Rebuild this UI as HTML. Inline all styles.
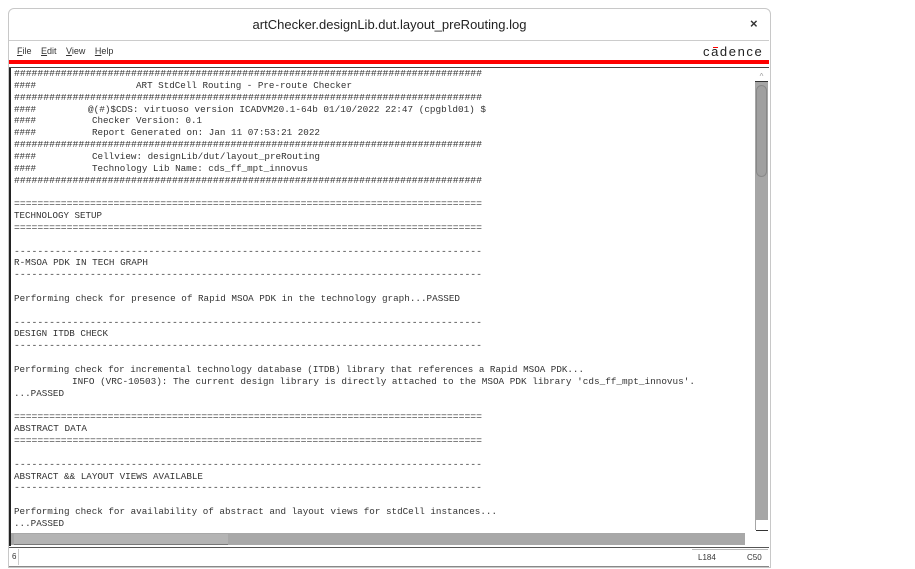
<!DOCTYPE html>
<html><head><meta charset="utf-8"><style>
body{margin:0;width:915px;height:569px;background:#fff;position:relative;overflow:hidden;font-family:"Liberation Sans",sans-serif}
.a{position:absolute}
.t{position:absolute;font-family:"Liberation Mono",monospace;font-size:9.5px;line-height:10px;color:#333;white-space:pre;transform-origin:0 50%}
</style></head><body>
<div class="a" style="left:8px;top:8px;width:761px;height:558px;border:1px solid #c8c8c8;border-radius:6px 6px 0 0;background:#fff"></div>
<div class="a" style="left:0;top:17px;width:779px;text-align:center;font-size:13px;color:#222">artChecker.designLib.dut.layout_preRouting.log</div>
<div class="a" style="left:750px;top:16px;font-size:13px;font-weight:bold;color:#333">×</div>
<div class="a" style="left:9px;top:40px;width:760px;height:1px;background:#ccc"></div>
<div class="a" style="left:17px;top:46px;font-size:9px;color:#333;word-spacing:7px"><u>F</u>ile <u>E</u>dit <u>V</u>iew <u>H</u>elp</div>
<div class="a" style="left:703px;top:44px;font-size:13px;letter-spacing:1.6px;color:#222">cadence</div>
<div class="a" style="left:713px;top:47px;width:5px;height:1px;background:#f00"></div>
<div class="a" style="left:9px;top:60px;width:760px;height:4px;background:#f00"></div>
<div class="a" style="left:9px;top:67px;width:760px;height:1px;background:#444"></div>
<div class="a" style="left:9px;top:68px;width:2px;height:478px;background:#222"></div>
<div class="a" style="left:755px;top:72px;width:13px;height:9px;border-bottom:1px solid #333;color:#999;font-size:8px;text-align:center;line-height:9px">^</div>
<div class="a" style="left:755px;top:82px;width:13px;height:448px;background:#a6a6a6"></div>
<div class="a" style="left:756px;top:85px;width:11px;height:92px;background:#a0a0a0;border:1px solid #888;border-radius:6px;box-sizing:border-box"></div>
<div class="a" style="left:756px;top:520px;width:12px;height:10px;background:#fff;border-bottom:1px solid #333"></div>
<div class="a" style="left:11px;top:533px;width:734px;height:12px;background:#a8a8a8"></div>
<div class="a" style="left:14px;top:534px;width:214px;height:10px;background:#b4b4b4;border-bottom:1px solid #777"></div>
<div class="a" style="left:9px;top:547px;width:760px;height:1px;background:#555"></div>
<div class="a" style="left:12px;top:552px;font-size:8px;color:#333">6</div>
<div class="a" style="left:18px;top:549px;width:1px;height:16px;background:#ccc"></div>
<div class="a" style="left:692px;top:549px;width:76px;height:1px;background:#bbb"></div>
<div class="a" style="left:698px;top:553px;font-size:8px;color:#333">L184</div>
<div class="a" style="left:747px;top:553px;font-size:8px;color:#333">C50</div>
<div class="a" style="left:9px;top:566px;width:760px;height:1px;background:#888"></div>
<div id="txt"></div>
<script>
var H="################################################################################";
var E="================================================================================";
var D="--------------------------------------------------------------------------------";
var L=[
[0,14,482,H],[1,14,36,"####"],[1,136,352,"ART StdCell Routing - Pre-route Checker"],[2,14,482,H],
[3,14,36,"####"],[3,88,486,"@(#)$CDS: virtuoso version ICADVM20.1-64b 01/10/2022 22:47 (cpgbld01) $"],
[4,14,36,"####"],[4,92,202,"Checker Version: 0.1"],[5,14,36,"####"],[5,92,320,"Report Generated on: Jan 11 07:53:21 2022"],
[6,14,482,H],[7,14,36,"####"],[7,92,320,"Cellview: designLib/dut/layout_preRouting"],[8,14,36,"####"],[8,92,308,"Technology Lib Name: cds_ff_mpt_innovus"],[9,14,482,H],
[11,14,482,E],[12,14,102,"TECHNOLOGY SETUP"],[13,14,482,E],
[15,14,482,D],[16,14,148,"R-MSOA PDK IN TECH GRAPH"],[17,14,482,D],
[19,14,460,"Performing check for presence of Rapid MSOA PDK in the technology graph...PASSED"],
[21,14,482,D],[22,14,108,"DESIGN ITDB CHECK"],[23,14,482,D],
[25,14,584,"Performing check for incremental technology database (ITDB) library that references a Rapid MSOA PDK..."],
[26,72,695,"INFO (VRC-10503): The current design library is directly attached to the MSOA PDK library 'cds_ff_mpt_innovus'."],
[27,14,64,"...PASSED"],
[29,14,482,E],[30,14,87,"ABSTRACT DATA"],[31,14,482,E],
[33,14,482,D],[34,14,203,"ABSTRACT && LAYOUT VIEWS AVAILABLE"],[35,14,482,D],
[37,14,497,"Performing check for availability of abstract and layout views for stdCell instances..."],
[38,14,64,"...PASSED"]];
var c=document.getElementById("txt");
L.forEach(function(l){var d=document.createElement("div");d.className="t";d.textContent=l[3];
d.style.left=l[1]+"px";d.style.top=(74+l[0]*11.84-5)+"px";c.appendChild(d);
var w=d.getBoundingClientRect().width;d.style.transform="scaleX("+((l[2]-l[1])/w)+")";});
</script>
</body></html>
